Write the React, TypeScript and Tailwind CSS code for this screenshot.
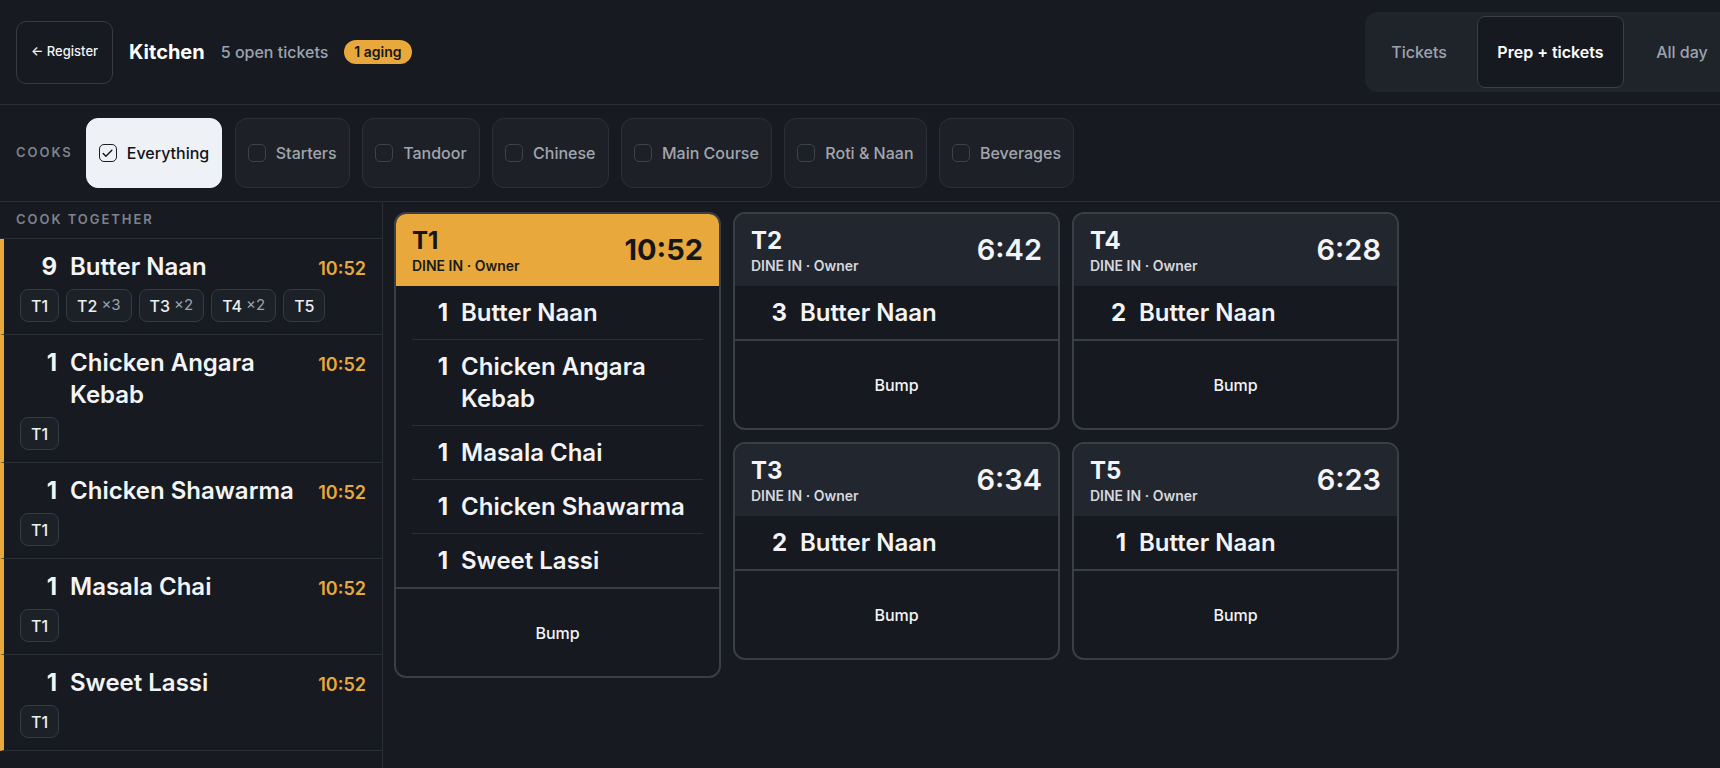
import { Check } from "lucide-react";

type Tag = { t: string; x?: string };
const together: { qty: number; name: string; tags: Tag[] }[] = [
  {
    qty: 9,
    name: "Butter Naan",
    tags: [{ t: "T1" }, { t: "T2", x: "3" }, { t: "T3", x: "2" }, { t: "T4", x: "2" }, { t: "T5" }],
  },
  { qty: 1, name: "Chicken Angara Kebab", tags: [{ t: "T1" }] },
  { qty: 1, name: "Chicken Shawarma", tags: [{ t: "T1" }] },
  { qty: 1, name: "Masala Chai", tags: [{ t: "T1" }] },
  { qty: 1, name: "Sweet Lassi", tags: [{ t: "T1" }] },
];

type Ticket = { id: string; time: string; aging?: boolean; items: [number, string][] };
const columns: Ticket[][] = [
  [
    {
      id: "T1",
      time: "10:52",
      aging: true,
      items: [
        [1, "Butter Naan"],
        [1, "Chicken Angara Kebab"],
        [1, "Masala Chai"],
        [1, "Chicken Shawarma"],
        [1, "Sweet Lassi"],
      ],
    },
  ],
  [
    { id: "T2", time: "6:42", items: [[3, "Butter Naan"]] },
    { id: "T3", time: "6:34", items: [[2, "Butter Naan"]] },
  ],
  [
    { id: "T4", time: "6:28", items: [[2, "Butter Naan"]] },
    { id: "T5", time: "6:23", items: [[1, "Butter Naan"]] },
  ],
];

const cooks = ["Everything", "Starters", "Tandoor", "Chinese", "Main Course", "Roti & Naan", "Beverages"];

const TicketCard = ({ ticket }: { ticket: Ticket }) => {
  return (
    <div className="flex flex-col overflow-hidden rounded-xl border-2 border-[#393e47] bg-[#16191f]">
      <div
        className={
          ticket.aging
            ? "flex items-center justify-between bg-[#e8a83b] px-4 py-[11px] text-[#14161a]"
            : "flex items-center justify-between bg-[#22262e] px-4 py-[11px] text-[#f3f4f6]"
        }
      >
        <div className="flex flex-col">
          <span className="text-2xl leading-8 font-bold">{ticket.id}</span>
          <span
            className={
              ticket.aging
                ? "text-sm leading-[18px] font-semibold text-[#1a1a1a]"
                : "text-sm leading-[18px] font-semibold text-[#d5d8de]"
            }
          >
            DINE IN · Owner
          </span>
        </div>
        <span className={ticket.aging ? "text-[29px] font-bold" : "text-[29px] font-semibold"}>{ticket.time}</span>
      </div>
      <div className="flex flex-col px-4">
        {ticket.items.map(([q, n], i) => (
          <div
            key={n}
            className={
              i < ticket.items.length - 1
                ? "flex gap-[13px] border-b border-[#2b2f37] py-[10.5px] text-2xl leading-8 text-[#f3f4f6]"
                : "flex gap-[13px] py-[10.5px] text-2xl leading-8 text-[#f3f4f6]"
            }
          >
            <span className="w-9 shrink-0 text-right font-bold">{q}</span>
            <span className="font-semibold">{n}</span>
          </div>
        ))}
      </div>
      <button
        type="button"
        className="flex h-[89px] items-center justify-center border-t-2 border-[#393e47] text-base font-medium text-[#f3f4f6]"
      >
        Bump
      </button>
    </div>
  );
};

const App = () => {
  return (
    <div className="flex h-[768px] w-[1720px] flex-col overflow-hidden bg-[#171a20] font-['Inter',sans-serif] text-white">
      {/* top bar */}
      <header className="flex h-[105px] shrink-0 items-center border-b border-[#2a2e36] px-4">
        <button
          type="button"
          className="flex h-[63px] items-center rounded-[10px] border border-[#373b44] px-3.5 text-[13px] font-medium text-[#f3f4f6]"
        >
          ← Register
        </button>
        <div className="ml-4 flex items-center gap-4">
          <span className="text-xl font-bold">Kitchen</span>
          <span className="text-base font-medium text-[#9ca3af]">5 open tickets</span>
          <span className="rounded-full bg-[#e8a83b] px-2.5 py-0.5 text-sm font-semibold text-[#16181c]">
            1 aging
          </span>
        </div>
        <div className="-mr-[38px] ml-auto flex h-[80px] shrink-0 gap-0.5 rounded-xl bg-[#1f232a] p-1">
          <div className="flex w-[100px] items-center justify-center text-base font-medium text-[#9ca3af]">
            Tickets
          </div>
          <div className="ml-1.5 flex w-[147px] items-center justify-center rounded-lg border border-[#3a3f48] bg-[#16191f] text-base font-semibold text-white">
            Prep + tickets
          </div>
          <div className="flex w-[112px] items-center justify-center text-base font-medium text-[#9ca3af]">
            All day
          </div>
        </div>
      </header>

      {/* cook filters */}
      <div className="flex h-[97px] shrink-0 items-center gap-[13px] border-b border-[#2a2e36] px-4">
        <span className="text-[13px] font-semibold tracking-[0.15em] text-[#7d838d]">COOKS</span>
        <div className="flex gap-[12.5px]">
          {cooks.map((c, i) =>
            i === 0 ? (
              <div
                key={c}
                className="flex h-[70px] items-center gap-2.5 rounded-xl border border-[#eef1f5] bg-[#eef1f5] px-3 text-base font-medium text-[#111318]"
              >
                <span className="flex size-[18px] items-center justify-center rounded-[5px] border-[1.5px] border-[#1b1e24]">
                  <Check size={13} strokeWidth={2.5} />
                </span>
                {c}
              </div>
            ) : (
              <div
                key={c}
                className="flex h-[70px] items-center gap-2.5 rounded-xl border border-[#2b2f37] bg-[#1d2027] px-3 text-base font-medium text-[#a1a6ae]"
              >
                <span className="size-[18px] rounded-[5px] border-[1.5px] border-[#3d424b]" />
                {c}
              </div>
            )
          )}
        </div>
      </div>

      <div className="flex min-h-0 flex-1">
        {/* cook together sidebar */}
        <aside className="flex w-[383px] shrink-0 flex-col border-r border-[#2a2e36]">
          <div className="flex h-[37px] items-center border-b border-[#2a2e36] px-4 text-[13px] font-semibold tracking-[0.15em] text-[#7d838d]">
            COOK TOGETHER
          </div>
          {together.map((row) => (
            <div key={row.name} className="flex flex-col border-b border-l-4 border-b-[#2a2e36] border-l-[#e8a83b] py-3 pr-4 pl-4">
              <div className="flex items-baseline gap-[13px]">
                <span className="w-[37px] shrink-0 text-right text-2xl leading-8 font-bold text-[#f3f4f6]">
                  {row.qty}
                </span>
                <span className="flex-1 text-2xl leading-8 font-semibold text-[#f3f4f6]">{row.name}</span>
                <span className="text-lg font-semibold text-[#e8a83b]">10:52</span>
              </div>
              <div className="mt-1.5 flex gap-[7px]">
                {row.tags.map((tag) => (
                  <span
                    key={tag.t}
                    className="flex h-[33px] items-center rounded-lg border border-[#353a43] bg-[#1c2027] px-2.5 text-base font-medium text-[#eceef1]"
                  >
                    {tag.t}
                    {tag.x && <span className="ml-1 text-[15px] font-normal text-[#9ca3af]">×{tag.x}</span>}
                  </span>
                ))}
              </div>
            </div>
          ))}
        </aside>

        {/* tickets */}
        <main className="flex flex-1 items-start gap-3 pt-[10px] pl-[11px]">
          {columns.map((col, i) => (
            <div key={i} className="flex w-[327px] flex-col gap-3">
              {col.map((t) => (
                <TicketCard key={t.id} ticket={t} />
              ))}
            </div>
          ))}
        </main>
      </div>
    </div>
  );
};

export default App;
